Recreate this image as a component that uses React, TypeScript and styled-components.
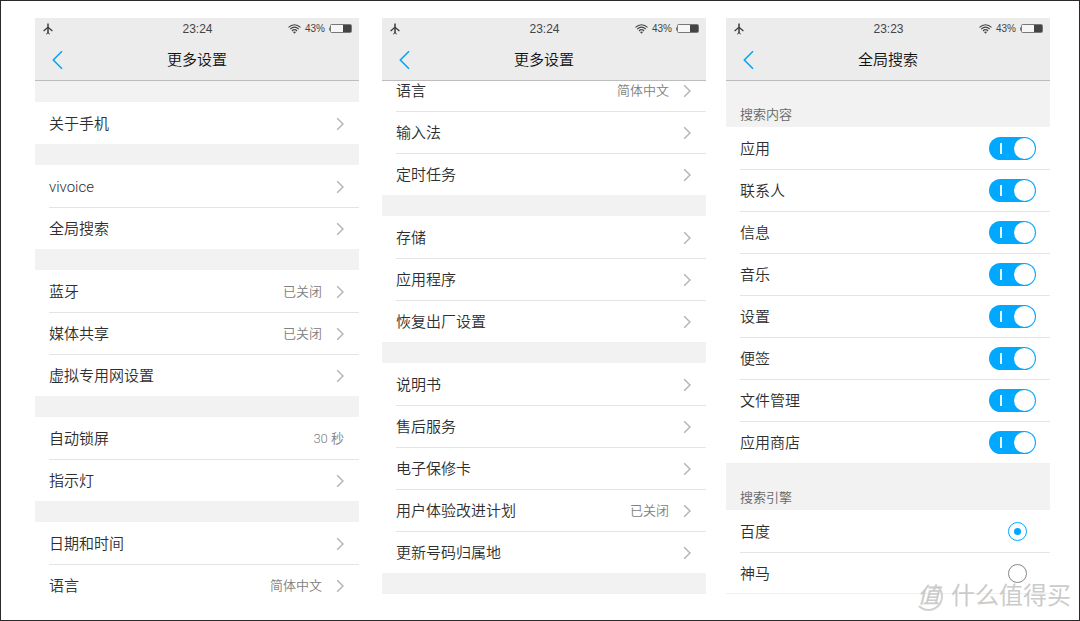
import React from 'react';
import styled, { createGlobalStyle } from 'styled-components';

const GlobalStyle = createGlobalStyle`
  *, *::before, *::after { box-sizing: border-box; }
  body {
    margin: 0;
    background: #fff;
    color: #2e2e2e;
    font-family: Roboto, 'Noto Sans CJK SC', sans-serif;
    font-weight: 350;
  }
`;

const Page = styled.main`
  position: relative;
  display: flex;
  height: 100vh;
  padding: 17px 29px 26px 34px;
  border: 1px solid #2b292a;
  background: #fff;
`;

const Phone = styled.section<{ $gap: number }>`
  flex: 1 1 0;
  min-width: 0;
  min-height: 0;
  display: flex;
  flex-direction: column;
  margin-right: ${(p) => p.$gap}px;
`;

const Header = styled.header`
  flex: none;
  background: #ececec;
  border-bottom: 1px solid #bdbdbd;
`;

const StatusBar = styled.div`
  display: grid;
  grid-template-columns: 1fr auto 1fr;
  align-items: center;
  height: 22px;
  padding: 0 7px 0 8px;
  font-family: 'Liberation Sans', sans-serif;
  font-size: 12px;
  line-height: 22px;
  color: #444;

  svg { display: block; }
`;

const StatusRight = styled.div`
  display: flex;
  justify-content: flex-end;
  align-items: center;
  gap: 4px;
  font-size: 10px;
`;

const TitleBar = styled.div`
  display: grid;
  grid-template-columns: 44px 1fr 44px;
  align-items: center;
  height: 40px;
`;

const BackButton = styled.button`
  display: flex;
  align-items: center;
  height: 40px;
  padding: 0 0 0 17px;
  border: 0;
  background: none;
  color: #00a2f8;
`;

const Title = styled.h1`
  margin: 0;
  font-size: 15px;
  font-weight: 350;
  line-height: 40px;
  text-align: center;
  color: #111;
`;

const Body = styled.div<{ $atEnd?: boolean }>`
  flex: 1;
  min-height: 0;
  overflow: hidden;
  display: flex;
  flex-direction: column;
  justify-content: ${(p) => (p.$atEnd ? 'flex-end' : 'flex-start')};

  > * { flex: none; }
`;

const Spacer = styled.div`
  height: 21px;
  background: #f2f2f2;
`;

const GroupHeading = styled.h2`
  margin: 0;
  padding: 22px 14px 0;
  background: #f2f2f2;
  font-size: 13px;
  font-weight: 350;
  line-height: 24px;
  color: #666;

  ul + & { border-top: 1px solid #f0f0f0; }
`;

const List = styled.ul`
  list-style: none;
  margin: 0;
  padding: 0 0 0 14px;
`;

const Item = styled.li`
  height: 42px;
  border-top: 1px solid #e4e4e4;

  &:first-child { border-top-color: transparent; }
`;

const RowLink = styled.a`
  display: flex;
  align-items: center;
  height: 41px;
  padding-right: 15px;
  color: inherit;
  text-decoration: none;
`;

const RowLabel = styled.label`
  display: flex;
  align-items: center;
  height: 41px;
  padding-right: 14px;
`;

const Text = styled.span`
  flex: 1;
  font-size: 15px;
  line-height: 22px;
`;

const Value = styled.span`
  font-size: 13px;
  line-height: 22px;
  color: #808080;
`;

const Chevron = styled.svg`
  display: block;
  margin-left: 14px;
`;

const Switch = styled.input`
  appearance: none;
  display: flex;
  align-items: center;
  width: 47px;
  height: 23px;
  margin: 0;
  padding: 0 1px 0 11px;
  border-radius: 12px;
  background: #b5b5b5;

  &:checked { background: #00a8ff; }

  &::before {
    content: '';
    width: 2px;
    height: 11px;
    background: #e6f6ff;
  }

  &::after {
    content: '';
    width: 21px;
    height: 21px;
    margin-left: auto;
    border-radius: 50%;
    background: #fff;
  }
`;

const Radio = styled.input`
  appearance: none;
  display: grid;
  place-items: center;
  width: 19px;
  height: 19px;
  margin: 0 9px 0 0;
  border: 1px solid #858585;
  border-radius: 50%;

  &:checked { border-color: #00a8ff; }

  &:checked::before {
    content: '';
    width: 7px;
    height: 7px;
    border-radius: 50%;
    background: #00a8ff;
  }
`;

const EndRule = styled.div`
  height: 1px;
  margin-top: -1px;
  background: #f0f0f0;
`;

const Watermark = styled.div`
  position: absolute;
  right: 8px;
  bottom: 8px;
  display: flex;
  align-items: center;
  gap: 8px;
  color: #cbcbcb;
  font-size: 24px;
  font-weight: 400;
  line-height: 32px;
  pointer-events: none;
`;

const Seal = styled.span`
  display: grid;
  place-items: center;
  width: 29px;
  height: 29px;
  border: 2px solid transparent;
  border-right-color: #d0d0d0;
  border-bottom-color: #d0d0d0;
  border-radius: 50%;
  font-size: 22px;
  font-style: italic;
  font-weight: 500;
  line-height: 24px;
`;

function PlaneIcon() {
  return (
    <svg width="10" height="12" viewBox="0 0 10 12" fill="none" stroke="#3d3d3d" aria-hidden="true">
      <path d="M5 0.4V10.6" strokeWidth="1.5" />
      <path d="M5 4.3L0.6 8.1M5 4.3L9.4 8.1" strokeWidth="1.3" />
      <path d="M5 9.6L3.2 11.2M5 9.6L6.8 11.2" strokeWidth="1" />
    </svg>
  );
}

function WifiIcon() {
  return (
    <svg width="13" height="10" viewBox="0 0 13 10" fill="none" stroke="#444" strokeWidth="1.1" aria-hidden="true">
      <path d="M0.5 3.4C4 -0.2 9 -0.2 12.5 3.4" />
      <path d="M2.2 5.2C4.8 2.6 8.2 2.6 10.8 5.2" />
      <path d="M3.9 7C5.5 5.4 7.5 5.4 9.1 7" />
      <path d="M5 8L6.5 9.8L8 8C7.1 7.3 5.9 7.3 5 8Z" fill="#444" stroke="none" />
    </svg>
  );
}

function BatteryIcon() {
  return (
    <svg width="23" height="10" viewBox="0 0 23 10" aria-hidden="true">
      <path d="M0 3.5H1.5V6.5H0Z" fill="#777" />
      <rect x="1.5" y="0.5" width="21" height="8" rx="1" fill="#f6f6f6" stroke="#777" />
      <rect x="14" y="1" width="8" height="7" fill="#444" />
    </svg>
  );
}

type Row = { label: string; value?: string; plain?: boolean };

function PhoneHeader({ time, title }: { time: string; title: string }) {
  return (
    <Header>
      <StatusBar>
        <PlaneIcon />
        <span>{time}</span>
        <StatusRight>
          <WifiIcon />
          <span>43%</span>
          <BatteryIcon />
        </StatusRight>
      </StatusBar>
      <TitleBar>
        <BackButton type="button" aria-label="返回">
          <svg width="12" height="20" viewBox="0 0 12 20" fill="none" stroke="currentColor" strokeWidth="1.5">
            <path d="M10 1.3L1.3 10L10 18.7" />
          </svg>
        </BackButton>
        <Title>{title}</Title>
      </TitleBar>
    </Header>
  );
}

function LinkList({ rows }: { rows: Row[] }) {
  return (
    <List>
      {rows.map((row) => (
        <Item key={row.label}>
          <RowLink href="#">
            <Text>{row.label}</Text>
            {row.value && <Value>{row.value}</Value>}
            {!row.plain && (
              <Chevron width="8" height="14" viewBox="0 0 8 14" fill="none" stroke="#b4b4b4" strokeWidth="1.5" aria-hidden="true">
                <path d="M1.2 1.2L7 7L1.2 12.8" />
              </Chevron>
            )}
          </RowLink>
        </Item>
      ))}
    </List>
  );
}

const firstGroups: Row[][] = [
  [{ label: '关于手机' }],
  [{ label: 'vivoice' }, { label: '全局搜索' }],
  [{ label: '蓝牙', value: '已关闭' }, { label: '媒体共享', value: '已关闭' }, { label: '虚拟专用网设置' }],
  [{ label: '自动锁屏', value: '30 秒', plain: true }, { label: '指示灯' }],
  [{ label: '日期和时间' }, { label: '语言', value: '简体中文' }],
];

const secondGroups: Row[][] = [
  [{ label: '语言', value: '简体中文' }, { label: '输入法' }, { label: '定时任务' }],
  [{ label: '存储' }, { label: '应用程序' }, { label: '恢复出厂设置' }],
  [
    { label: '说明书' },
    { label: '售后服务' },
    { label: '电子保修卡' },
    { label: '用户体验改进计划', value: '已关闭' },
    { label: '更新号码归属地' },
  ],
];

const searchContent = ['应用', '联系人', '信息', '音乐', '设置', '便签', '文件管理', '应用商店'];
const searchEngines = ['百度', '神马'];

export default function App() {
  return (
    <>
      <GlobalStyle />
      <Page lang="zh-CN">
        <Phone $gap={23}>
          <PhoneHeader time="23:24" title="更多设置" />
          <Body>
            {firstGroups.map((rows) => (
              <React.Fragment key={rows[0].label}>
                <Spacer />
                <LinkList rows={rows} />
              </React.Fragment>
            ))}
          </Body>
        </Phone>

        <Phone $gap={20}>
          <PhoneHeader time="23:24" title="更多设置" />
          <Body $atEnd>
            {secondGroups.map((rows) => (
              <React.Fragment key={rows[0].label}>
                <LinkList rows={rows} />
                <Spacer />
              </React.Fragment>
            ))}
          </Body>
        </Phone>

        <Phone $gap={0}>
          <PhoneHeader time="23:23" title="全局搜索" />
          <Body>
            <GroupHeading>搜索内容</GroupHeading>
            <List>
              {searchContent.map((name) => (
                <Item key={name}>
                  <RowLabel>
                    <Text>{name}</Text>
                    <Switch type="checkbox" role="switch" defaultChecked />
                  </RowLabel>
                </Item>
              ))}
            </List>
            <GroupHeading>搜索引擎</GroupHeading>
            <List>
              {searchEngines.map((name, i) => (
                <Item key={name}>
                  <RowLabel>
                    <Text>{name}</Text>
                    <Radio type="radio" name="engine" defaultChecked={i === 0} />
                  </RowLabel>
                </Item>
              ))}
            </List>
            <EndRule />
          </Body>
        </Phone>

        <Watermark>
          <Seal>值</Seal>
          <span>什么值得买</span>
        </Watermark>
      </Page>
    </>
  );
}
